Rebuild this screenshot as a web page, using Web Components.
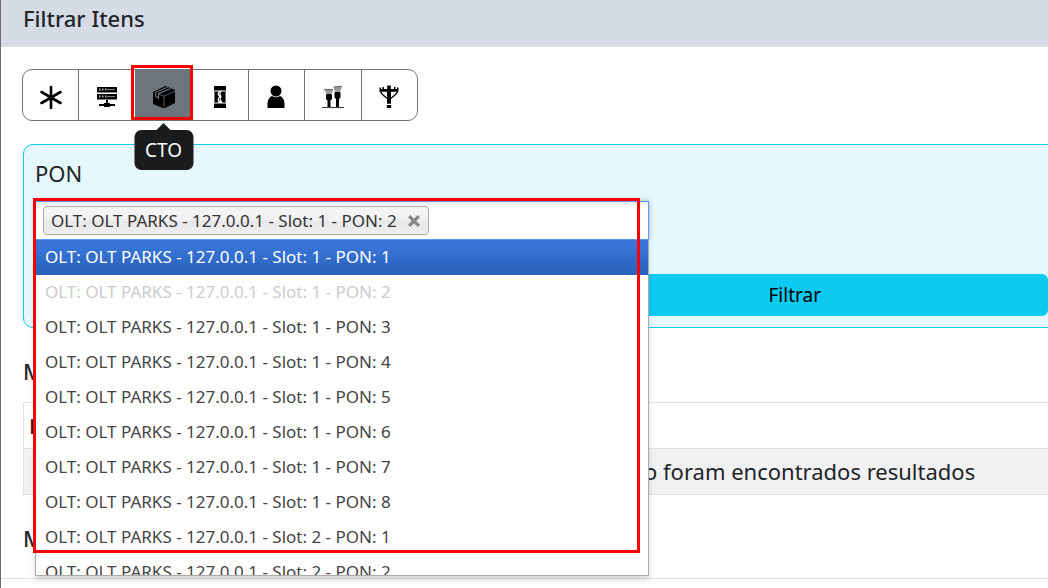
<!DOCTYPE html>
<html lang="pt-BR">
<head>
<meta charset="utf-8">
<meta name="viewport" content="width=device-width, initial-scale=1">
<title>Filtrar Itens</title>
<style>
    body {
        margin: 0;
        background-color: white;
        color: #212529;
        font-family: "Noto Sans", "Open Sans", sans-serif;
        font-size: 22px;
        overflow: hidden;
    }
</style>
</head>
<body>

<filter-page>
    <span slot="title">Filtrar Itens</span>
    <item-types></item-types>
    <filter-panel>
        <chosen-select label="PON"></chosen-select>
    </filter-panel>
    <result-section heading="M" column="N">Não foram encontrados resultados</result-section>
    <result-section heading="M"></result-section>
</filter-page>

<script>
// helper: every element clones its own template in an open shadow root
function attach(element, html) {
    const template = document.createElement("template");
    template.innerHTML = html;
    element.attachShadow({ mode: "open" }).appendChild(template.content.cloneNode(true));
}

// PAGE: title bar and the body under it
class FilterPage extends HTMLElement {
    constructor() {
        super();
        attach(this, `
<style>
    :host {
        display: block;
        border-left: 1px solid #6c6c70;
        min-height: 100vh;
        box-sizing: border-box;
        overflow: hidden;
    }
    header {
        background-color: #d6dce6;
        height: 47px;
        border-bottom: 1px solid #dee2e6;
        box-sizing: border-box;
    }
    h1 {
        margin: 0;
        padding-left: 22px;
        font-size: 22px;
        line-height: 36px;
        font-weight: 500;
    }
    main {
        display: flow-root;
        padding: 22px 0 25px 22px;
        margin-right: -12px;
        border-bottom: 1px solid #dee2e6;
    }
</style>
<header><h1><slot name="title"></slot></h1></header>
<main><slot></slot></main>
`);
    }
}

// ICONS, all on a 24 x 24 grid
const icons = {
    all: `<path d="M12 2v21M2.500 7l19 11M21.500 7l-19 11" stroke="currentColor" stroke-width="2.600" stroke-linecap="round"/>`,
    olt: `<path d="M2 2h20v5.500H2zM2 9h20v5.500H2z"/>
          <path d="M11 15h2v3h2v1h5v2h-5v1H9v-1H4v-2h5v-1h2z"/>
          <path d="M4 3.500h1.500v2H4zM7 3.500h1.500v2H7zM10 3.500h1.500v2H10zM4 10.500h1.500v2H4zM7 10.500h1.500v2H7zM10 10.500h1.500v2H10zM12 4.300h8v.6h-8zM12 11.300h8v.6h-8z" fill="#aaa"/>`,
    cto: `<path d="M13.500 1l9.500 4v13l-11 5.500L1 19V7z"/>
          <path d="M12 11.500v12M12 11.200l11-5" fill="none" stroke="#555d64" stroke-width=".9"/>
          <path d="M15.500 2.300L3.800 7.300v4.200l2.800 1.600V8.700L18.500 3.600" fill="none" stroke="#6c757d" stroke-width="1.100"/>
          <path d="M6.800 9l5.200 2.400" stroke="#6c757d" stroke-width=".9"/>`,
    splice: `<path d="M6 1h12v4.500H6zM6 18.500h12V23H6zM7 6.500h3.500l-1 3 1.500 2-1.500 3 1 3H7zM17 6.500h-3.500l-1 3 1.200 2-1.200 2.500 2 3.500H17z"/>
             <path d="M6.500 5.500v13M17.500 5.500v13M12 7v3M11.500 13v3" stroke="#777" stroke-width="1"/>`,
    client: `<circle cx="12" cy="6" r="5.500"/><path d="M3.500 23v-4.500c0-4 2-6.500 4.500-7.500 2.500 1.700 5.500 1.700 8 0 2.500 1 4.500 3.500 4.500 7.500V23z"/>`,
    ends: `<path d="M5.500 8.500h4.500l1 2v3.500l-1.500 1.500v7H6.500v-7L5 14v-3.500zM14.200 6h4.300l1 2v4.500L18 14v8.500h-3V14l-1.500-1.500V8z"/>
           <path d="M3.200 4.500h9L10.500 9h-5zM12.500 2l8.500-.8L19 7h-5z" fill="#999"/>
           <path d="M3 4.500h9M12.500 2l8.500-.8" stroke="#666" stroke-width="1"/>
           <path d="M1 22.500h22" stroke="#444" stroke-width="1.200"/>`,
    pole: `<path d="M10.200 .5h3.600V4H17V2h1.500v2H20V2.500h1.500V6.800H14v12h-4v-12H2.500V2.500H4V4h1.500V2H7v2h3.200zM9.800 20h4.400v3H9.800z"/>
           <path d="M3.500 6.500c1 3 3.500 4.500 7 7M20.500 6.500c-1 3-3.500 4.500-7 7" fill="none" stroke="currentColor" stroke-width="1.300"/>`
};

// BUTTON GROUP: one button for each type of item
class ItemTypes extends HTMLElement {
    constructor() {
        super();
        attach(this, `
<style>
    :host {
        display: block;
    }
    .group {
        display: flex;
        width: 396px;
        height: 52px;
        box-sizing: border-box;
        border: 1px solid #6c757d;
        border-radius: 10px;
        margin-left: -1px;
    }
    button {
        flex: 1;
        display: flex;
        align-items: center;
        justify-content: center;
        position: relative;
        padding: 4px 0 0;
        border: 0;
        border-right: 1px solid #6c757d;
        background: none;
        color: black;
        font: inherit;
        cursor: pointer;
    }
    button:last-child {
        border-right: 0;
    }
    button.active {
        background-color: #6c757d;
    }
    svg {
        width: 24px;
        height: 24px;
        fill: currentColor;
    }
    .mark {
        position: absolute;
        inset: -5px -2px 0 -5px;
        border: 3px solid red;
    }
    .tooltip {
        position: absolute;
        z-index: 2;
        top: 60px;
        left: 50%;
        transform: translateX(-50%);
        padding: 0 11px;
        border-radius: 7px;
        background-color: #1a1b1c;
        color: white;
        font-size: 19px;
        line-height: 40px;
    }
    .tooltip::before {
        content: "";
        position: absolute;
        bottom: 100%;
        left: 50%;
        margin-left: -7px;
        border: 7px solid transparent;
        border-top: 0;
        border-bottom-color: #1a1b1c;
    }
</style>
<div class="group" role="group" aria-label="Tipo"></div>
`);
        const group = this.shadowRoot.querySelector(".group");
        for (const name in icons) {
            const active = name === "cto";
            group.insertAdjacentHTML("beforeend", `
<button type="button" class="${active ? "active" : ""}" aria-label="${name.toUpperCase()}" aria-pressed="${active}">
    <svg viewBox="0 0 24 24" aria-hidden="true">${icons[name]}</svg>
    ${active ? `<span class="mark"></span><span class="tooltip" role="tooltip">CTO</span>` : ""}
</button>`);
        }
    }
}

// PANEL: the fields come in the slot, the button stays in the right half
class FilterPanel extends HTMLElement {
    constructor() {
        super();
        attach(this, `
<style>
    :host {
        display: block;
        margin-top: 23px;
        padding: 12px 11px 11px;
        border: 1px solid #0dcaf0;
        border-radius: 10px;
        background-color: #e5f8fd;
    }
    .actions {
        display: grid;
        grid-template-columns: 1fr 1fr;
        margin-top: 34px;
    }
    button {
        grid-column: 2;
        height: 42px;
        border: 0;
        border-radius: 6px;
        background-color: #0dcaf0;
        color: black;
        font: inherit;
        font-size: 19px;
        cursor: pointer;
    }
</style>
<slot></slot>
<div class="actions"><button type="button">Filtrar</button></div>
`);
    }
}

// MULTIPLE SELECT with its list open
class ChosenSelect extends HTMLElement {
    constructor() {
        super();
        attach(this, `
<style>
    :host {
        display: block;
    }
    label {
        display: block;
        margin-bottom: 12px;
        line-height: 32px;
    }
    .chosen {
        position: relative;
        width: 614px;
        max-width: 100%;
        font-size: 17px;
        color: #444;
    }
    .choices {
        display: flex;
        align-items: center;
        gap: 8px;
        height: 39px;
        box-sizing: border-box;
        padding: 0 7px;
        border: 1px solid #5897fb;
        background: linear-gradient(#eee 1%, #fff 15%) white;
        box-shadow: 0 0 5px rgba(0, 0, 0, 0.3);
    }
    .choice {
        display: flex;
        align-items: center;
        gap: 10px;
        height: 29px;
        box-sizing: border-box;
        padding: 0 7px;
        border: 1px solid #aaa;
        border-radius: 4px;
        background: linear-gradient(#f4f4f4 20%, #f0f0f0 50%, #e8e8e8 52%, #eee);
        box-shadow: 0 1px 0 rgba(0, 0, 0, 0.05);
        color: #333;
        white-space: nowrap;
    }
    .choice button {
        display: flex;
        padding: 0;
        border: 0;
        background: none;
        cursor: pointer;
    }
    input {
        flex: 1;
        min-width: 0;
        border: 0;
        outline: 0;
        background: transparent;
        font: inherit;
    }
    ul {
        position: absolute;
        z-index: 1;
        top: 100%;
        left: 0;
        right: 0;
        height: 335px;
        margin: 0;
        padding: 0;
        overflow: hidden;
        border: 1px solid #aaa;
        border-top: 0;
        background-color: white;
        box-shadow: 0 4px 5px rgba(0, 0, 0, 0.15);
        list-style: none;
    }
    li {
        padding: 0 9px 2px;
        line-height: 33px;
        white-space: nowrap;
    }
    li.highlighted {
        background: linear-gradient(#3875d7 20%, #2a62bc 90%);
        color: white;
    }
    li.disabled {
        color: #ccc;
    }
    .mark {
        position: absolute;
        z-index: 2;
        top: -3px;
        left: -2px;
        right: 9px;
        height: 355px;
        box-sizing: border-box;
        border: 3px solid red;
        pointer-events: none;
    }
</style>
<label for="search"></label>
<div class="chosen">
    <div class="choices">
        <span class="choice">OLT: OLT PARKS - 127.0.0.1 - Slot: 1 - PON: 2
            <button type="button" aria-label="Remover">
                <svg width="14" height="14" viewBox="0 0 13 13"><path d="M2 2l9 9M11 2l-9 9" stroke="#888" stroke-width="3"/></svg>
            </button>
        </span>
        <input id="search" type="text" autocomplete="off">
    </div>
    <ul role="listbox"></ul>
    <div class="mark"></div>
</div>
`);
        const list = this.shadowRoot.querySelector("ul");
        for (let i = 0; i < 10; i++) {
            const item = document.createElement("li");
            item.setAttribute("role", "option");
            item.textContent = `OLT: OLT PARKS - 127.0.0.1 - Slot: ${i < 8 ? 1 : 2} - PON: ${i % 8 + 1}`;
            if (i === 0) item.className = "highlighted";
            if (i === 1) item.className = "disabled";
            list.appendChild(item);
        }
    }

    connectedCallback() {
        this.shadowRoot.querySelector("label").textContent = this.getAttribute("label");
    }
}

// RESULTS: heading, and a table when there is a column to show
class ResultSection extends HTMLElement {
    constructor() {
        super();
        attach(this, `
<style>
    :host {
        display: block;
        margin-top: 28px;
    }
    h2 {
        margin: 0;
        font-size: 22px;
        line-height: 30px;
        font-weight: 500;
    }
    table {
        width: 100%;
        margin-top: 16px;
        border: 1px solid #dee2e6;
        border-collapse: collapse;
    }
    tr {
        height: 46px;
        border-bottom: 1px solid #dee2e6;
    }
    tbody tr {
        background-color: #f1f1f1;
    }
    th, td {
        padding: 0 5px 2px;
        line-height: 30px;
    }
    th {
        width: 49%;
        text-align: left;
    }
    td {
        text-align: center;
    }
</style>
<h2></h2>
<table>
    <thead><tr><th></th><td></td></tr></thead>
    <tbody><tr><td></td><td><slot></slot></td></tr></tbody>
</table>
`);
    }

    connectedCallback() {
        this.shadowRoot.querySelector("h2").textContent = this.getAttribute("heading");
        if (this.hasAttribute("column")) {
            this.shadowRoot.querySelector("th").textContent = this.getAttribute("column");
        } else {
            this.shadowRoot.querySelector("table").remove();
        }
    }
}

customElements.define("filter-page", FilterPage);
customElements.define("item-types", ItemTypes);
customElements.define("filter-panel", FilterPanel);
customElements.define("chosen-select", ChosenSelect);
customElements.define("result-section", ResultSection);
</script>
</body>
</html>
